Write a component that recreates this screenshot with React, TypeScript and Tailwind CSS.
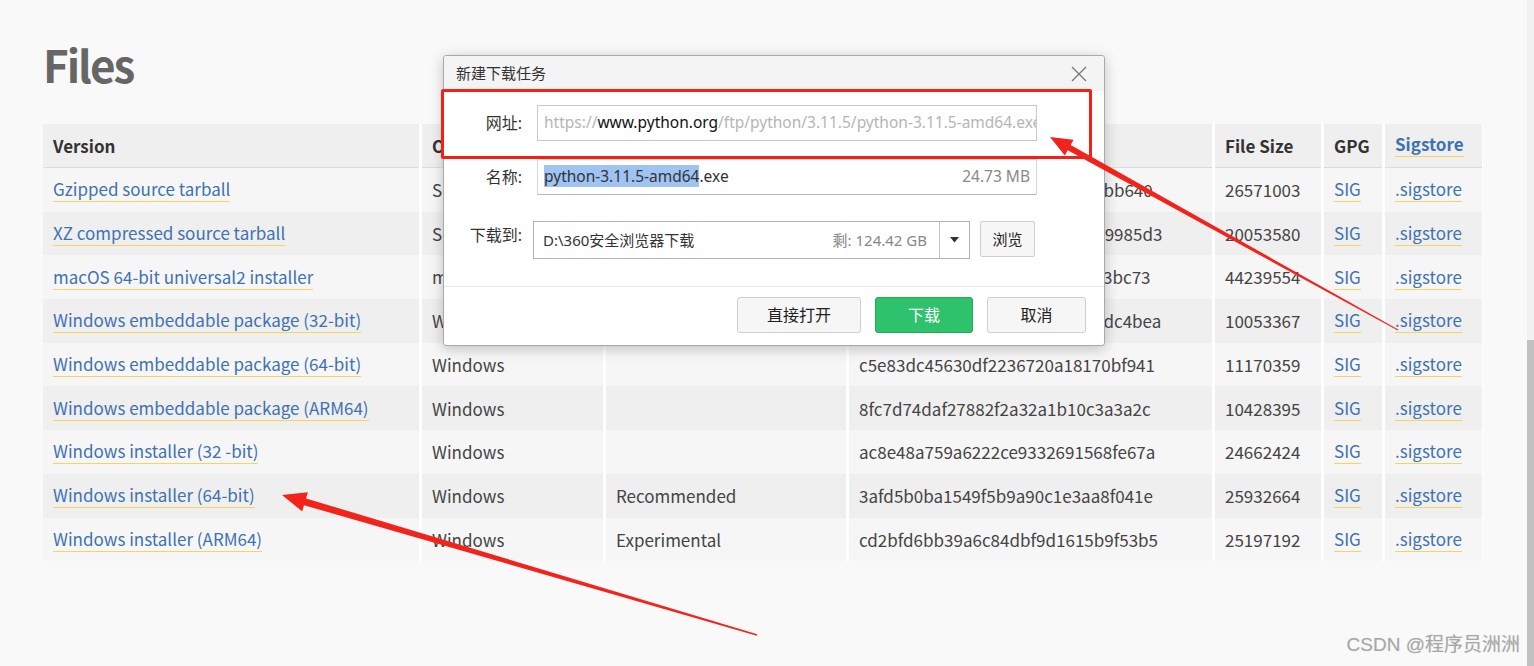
import React from "react"

interface Row {
  version: string
  os: string
  desc: string
  md5: string
  size: string
}

const rows: Row[] = [
  { version: "Gzipped source tarball", os: "Source release", desc: "", md5: "b13ec58fa6ebf5b0f7178555c55bb640", size: "26571003" },
  { version: "XZ compressed source tarball", os: "Source release", desc: "", md5: "a89d5d0a2a9a4a6b2e3f0d1c7e9985d3", size: "20053580" },
  { version: "macOS 64-bit universal2 installer", os: "macOS", desc: "for macOS 10.9 and later", md5: "f2e5f8c4a13b7d26e5a9c10f24a3bc73", size: "44239554" },
  { version: "Windows embeddable package (32-bit)", os: "Windows", desc: "", md5: "0a2c4d9e81f7b36a5e2d4c8b91dc4bea", size: "10053367" },
  { version: "Windows embeddable package (64-bit)", os: "Windows", desc: "", md5: "c5e83dc45630df2236720a18170bf941", size: "11170359" },
  { version: "Windows embeddable package (ARM64)", os: "Windows", desc: "", md5: "8fc7d74daf27882f2a32a1b10c3a3a2c", size: "10428395" },
  { version: "Windows installer (32 -bit)", os: "Windows", desc: "", md5: "ac8e48a759a6222ce9332691568fe67a", size: "24662424" },
  { version: "Windows installer (64-bit)", os: "Windows", desc: "Recommended", md5: "3afd5b0ba1549f5b9a90c1e3aa8f041e", size: "25932664" },
  { version: "Windows installer (ARM64)", os: "Windows", desc: "Experimental", md5: "cd2bfd6bb39a6c84dbf9d1615b9f53b5", size: "25197192" },
]

const cols = "grid grid-cols-[376px_181px_240px_363px_106px_58px_97px] gap-x-[3px] bg-white"

function PyLink({ children, bold }: { children: React.ReactNode; bold?: boolean }) {
  return (
    <span className={`inline-block border-b border-[#f5d55c] leading-[20px] pb-[2px] text-[#3f72b0] ${bold ? "font-bold" : ""}`}>
      {children}
    </span>
  )
}

function FilesTable() {
  return (
    <div className="w-[1440px] text-[17px] text-[#444] font-['Noto_Sans_CJK_SC',sans-serif]">
      {/* header */}
      <div className={cols}>
        {["Version", "Operating System", "Description", "MD5 Sum", "File Size", "GPG"].map((h) => (
          <div key={h} className="h-[44px] flex items-center px-[10px] bg-[#efefef] border-b border-[#dcdcdc] font-bold text-[#333]">
            {h}
          </div>
        ))}
        <div className="h-[44px] flex items-center px-[10px] bg-[#efefef] border-b border-[#dcdcdc]">
          <PyLink bold>Sigstore</PyLink>
        </div>
      </div>
      {rows.map((r, i) => {
        const bg = i % 2 === 0 ? "bg-[#f6f6f6]" : "bg-[#efefef]"
        return (
          <div key={r.version} className={cols}>
            <div className={`h-[43.7px] flex items-center px-[10px] pt-[2px] ${bg}`}>
              <PyLink>{r.version}</PyLink>
            </div>
            <div className={`h-[43.7px] flex items-center px-[10px] ${bg}`}>{r.os}</div>
            <div className={`h-[43.7px] flex items-center px-[10px] ${bg}`}>{r.desc}</div>
            <div className={`h-[43.7px] flex items-center px-[10px] ${bg}`}>{r.md5}</div>
            <div className={`h-[43.7px] flex items-center px-[10px] ${bg}`}>{r.size}</div>
            <div className={`h-[43.7px] flex items-center px-[10px] pt-[2px] ${bg}`}>
              <PyLink>SIG</PyLink>
            </div>
            <div className={`h-[43.7px] flex items-center px-[10px] pt-[2px] ${bg}`}>
              <PyLink>.sigstore</PyLink>
            </div>
          </div>
        )
      })}
    </div>
  )
}

function DownloadDialog() {
  return (
    <div className="absolute left-[443px] top-[55px] w-[662px] h-[291px] bg-white border border-[#a9a9a9] rounded-[3px] shadow-[0_3px_14px_rgba(0,0,0,0.22)] flex flex-col text-[#333] font-['Noto_Sans','Noto_Sans_CJK_SC',sans-serif]">
      {/* Title bar */}
      <div className="h-[35px] flex items-center justify-between bg-[#f4f4f4] pl-[12px] pr-[16px] rounded-t-[3px] shrink-0">
        <span className="text-[15px]">新建下载任务</span>
        <svg width="18" height="18" viewBox="0 0 18 18" className="text-[#777]">
          <path d="M2 2 L16 16 M16 2 L2 16" stroke="currentColor" strokeWidth="1.3" fill="none" />
        </svg>
      </div>

      <div className="flex flex-col pt-[14px]">
        {/* URL */}
        <div className="flex items-center">
          <span className="w-[80px] text-right pr-[2px] text-[16px]">网址:</span>
          <div className="ml-[13px] w-[500px] h-[36px] border border-[#c9c9c9] flex items-center px-[6px] overflow-hidden whitespace-nowrap text-[15.5px] text-[#b5b5b5]">
            https://<span className="text-[#111]">www.python.org</span>/ftp/python/3.11.5/python-3.11.5-amd64.exe
          </div>
        </div>

        {/* Name */}
        <div className="flex items-center mt-[18px]">
          <span className="w-[80px] text-right pr-[2px] text-[16px]">名称:</span>
          <div className="ml-[13px] w-[500px] h-[36px] border border-[#d6d6d6] border-b-[#b8b8b8] flex items-center justify-between px-[6px] whitespace-nowrap text-[15.5px]">
            <span>
              <span className="bg-[#9fc3f3]">python-3.11.5-amd64</span>.exe
            </span>
            <span className="text-[#888]">24.73 MB</span>
          </div>
        </div>

        {/* Target */}
        <div className="flex items-start mt-[26px]">
          <span className="w-[80px] text-right pr-[2px] text-[16px] pt-[2px]">下载到:</span>
          <div className="ml-[9px] w-[437px] h-[38px] border border-[#b3b3b3] flex items-center text-[15px]">
            <div className="flex-1 flex items-center justify-between pl-[9px] pr-[12px]">
              <span>D:\360安全浏览器下载</span>
              <span className="text-[#888]">剩: 124.42 GB</span>
            </div>
            <div className="w-[30px] h-full border-l border-[#c4c4c4] flex items-center justify-center">
              <svg width="9" height="6" viewBox="0 0 9 6">
                <path d="M0 0 L9 0 L4.5 5.5 Z" fill="#333" />
              </svg>
            </div>
          </div>
          <button className="ml-[10px] w-[55px] h-[36px] border border-[#cfcfcf] bg-[#f6f6f6] rounded-[2px] text-[15px] text-[#222]">
            浏览
          </button>
        </div>
      </div>

      <div className="mt-[27px] border-t border-[#e8e8e8]" />

      {/* Buttons */}
      <div className="flex justify-end gap-[14px] pt-[10px] pr-[18px]">
        <button className="w-[124px] h-[36px] border border-[#cfcfcf] bg-[#f6f6f6] rounded-[3px] text-[16px] text-[#222]">直接打开</button>
        <button className="w-[98px] h-[36px] border border-[#27a85c] bg-[#2fc26c] rounded-[3px] text-[16px] text-white">下载</button>
        <button className="w-[99px] h-[36px] border border-[#cfcfcf] bg-[#f6f6f6] rounded-[3px] text-[16px] text-[#222]">取消</button>
      </div>
    </div>
  )
}

export default function App() {
  return (
    <div className="relative flex w-[1534px] h-[666px] overflow-hidden bg-[#f9f9f9]">
      <div className="flex-1 pl-[43px]">
        <div className="h-[124px] pt-[38px]">
          <h1 className="text-[44px] leading-[52px] tracking-[-2px] font-bold text-[#666] font-['Noto_Sans_CJK_SC',sans-serif]">Files</h1>
        </div>
        <FilesTable />
      </div>

      {/* scrollbar */}
      <div className="w-[7px] flex flex-col bg-[#f1f1f1]">
        <div className="h-[340px]" />
        <div className="flex-1 bg-[#c1c1c1]" />
      </div>

      <DownloadDialog />

      {/* annotation box */}
      <div className="absolute left-[441px] top-[89px] w-[651px] h-[70px] border-[3px] border-[#f41f17] rounded-[2px] pointer-events-none" />

      {/* arrows */}
      <svg className="absolute inset-0 pointer-events-none" width="1534" height="666" viewBox="0 0 1534 666">
        <polygon
          fill="#f2231b"
          points="1050,137 1073.6,139.8 1070.7,145.1 1398.2,329.6 1397.8,330.4 1067.7,150.3 1064.8,155.6"
        />
        <polygon
          fill="#f2231b"
          points="282,495 307.9,492.2 306,498.4 757.2,634.3 756.8,635.7 304,505.2 302.2,511.4"
        />
      </svg>

      {/* watermark */}
      <div className="absolute right-[14px] bottom-[7px] text-[19px] text-[#a8a8a8] font-['Liberation_Sans','Noto_Sans_CJK_SC',sans-serif] [text-shadow:0_0_1px_rgba(0,0,0,0.15)]">
        CSDN @程序员洲洲
      </div>
    </div>
  )
}
